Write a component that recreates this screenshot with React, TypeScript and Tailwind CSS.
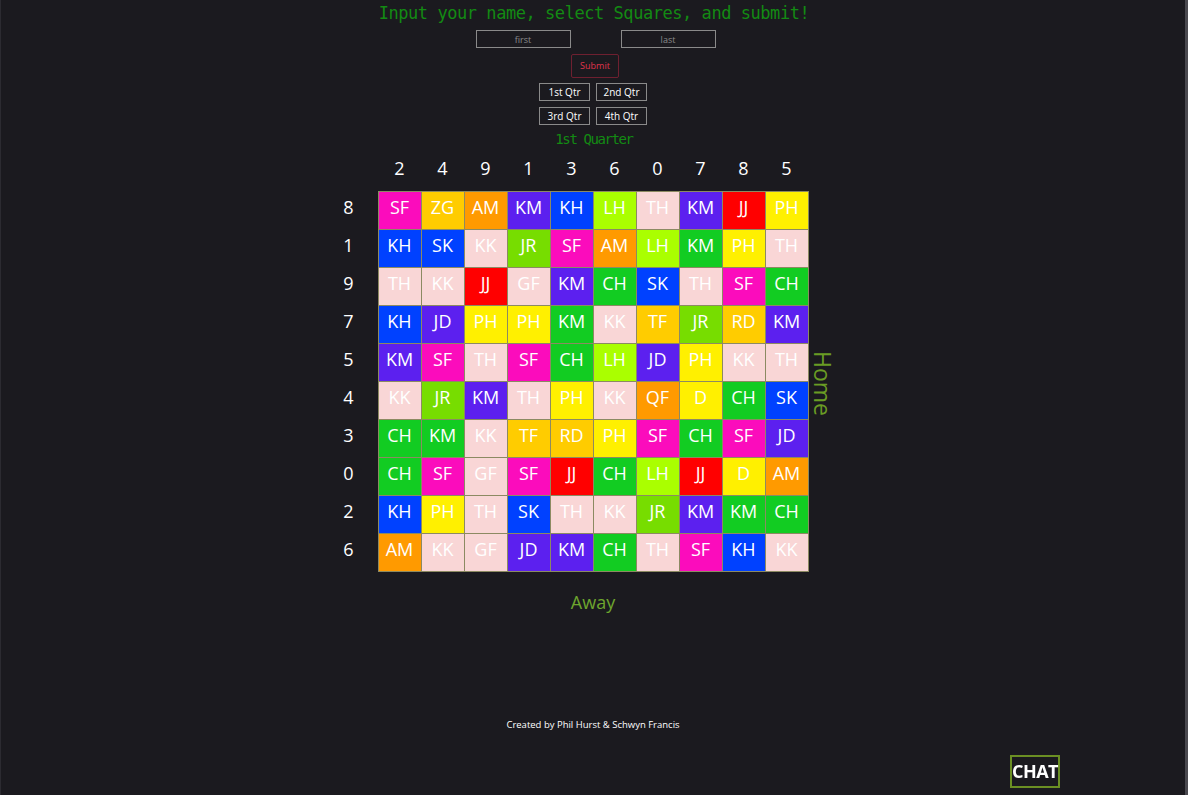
import React from "react";

const cols = [2, 4, 9, 1, 3, 6, 0, 7, 8, 5];
const rowsLabels = [8, 1, 9, 7, 5, 4, 3, 0, 2, 6];
const grid: string[][] = [
  ["SF", "ZG", "AM", "KM", "KH", "LH", "TH", "KM", "JJ", "PH"],
  ["KH", "SK", "KK", "JR", "SF", "AM", "LH", "KM*", "PH", "TH"],
  ["TH", "KK", "JJ", "GF", "KM", "CH", "SK", "TH", "SF", "CH"],
  ["KH", "JD", "PH", "PH", "KM*", "KK", "TF", "JR", "RD", "KM"],
  ["KM", "SF", "TH", "SF", "CH", "LH", "JD", "PH", "KK", "TH"],
  ["KK", "JR", "KM", "TH", "PH", "KK", "QF", "D", "CH", "SK"],
  ["CH", "KM*", "KK", "TF", "RD", "PH", "SF", "CH", "SF", "JD"],
  ["CH", "SF", "GF", "SF", "JJ", "CH", "LH", "JJ", "D", "AM"],
  ["KH", "PH", "TH", "SK", "TH", "KK", "JR", "KM", "KM*", "CH"],
  ["AM", "KK", "GF", "JD", "KM", "CH", "TH", "SF", "KH", "KK"],
];

const colorClass: Record<string, string> = {
  SF: "bg-[#fb0cbc]",
  ZG: "bg-[#ffcc00]",
  AM: "bg-[#ff9a00]",
  KM: "bg-[#5c20ef]",
  "KM*": "bg-[#12cc22]",
  KH: "bg-[#0041ff]",
  SK: "bg-[#0041ff]",
  LH: "bg-[#aaff00]",
  TH: "bg-[#f9d6d6]",
  KK: "bg-[#f9d6d6]",
  GF: "bg-[#f9d6d6]",
  JJ: "bg-[#ff0000]",
  PH: "bg-[#fff000]",
  D: "bg-[#fff000]",
  JR: "bg-[#77dd00]",
  CH: "bg-[#12cc22]",
  JD: "bg-[#5c20ef]",
  TF: "bg-[#ffcc00]",
  RD: "bg-[#ffcc00]",
  QF: "bg-[#ff9a00]",
};

const techno = { fontFamily: "'DejaVu Sans Mono', monospace" };

export default function App() {
  return (
    <div
      className="relative min-h-screen w-full bg-[#1b1a1f] border-l border-[#2c2b31] border-r-[3px] border-r-[#4a494f] flex flex-col items-center text-white"
      style={{ fontFamily: "'Open Sans', 'Noto Sans', sans-serif" }}
    >
      <div
        className="ml-[2px] h-[26px] leading-[26px] text-[17px] text-[#138a13] tracking-[-0.45px] whitespace-nowrap"
        style={techno}
      >
        Input your name, select Squares, and submit!
      </div>
      <div className="mt-[4px] ml-[5px] flex gap-[50px]">
        <input
          placeholder="first"
          className="w-[95px] h-[18px] bg-transparent border border-[#8a8a8a] text-center text-[9px] text-white placeholder:text-[#8a8a8a] outline-none"
        />
        <input
          placeholder="last"
          className="w-[95px] h-[18px] bg-transparent border border-[#8a8a8a] text-center text-[9px] text-white placeholder:text-[#8a8a8a] outline-none"
        />
      </div>
      <button className="mt-[6px] ml-[4px] w-[48px] h-[24px] border border-[#6e2030] rounded-[2px] text-[9px] text-[#e0344c] flex items-center justify-center">
        Submit
      </button>
      <div className="mt-[5px] grid grid-cols-2 gap-x-[6px] gap-y-[6px]">
        {["1st Qtr", "2nd Qtr", "3rd Qtr", "4th Qtr"].map((q) => (
          <button
            key={q}
            className="w-[51px] h-[18px] border border-[#8a8a8a] text-[10px] text-white flex items-center justify-center"
          >
            {q}
          </button>
        ))}
      </div>
      <div
        className="ml-[2px] h-[28px] leading-[28px] text-[14px] text-[#138a13] tracking-[-1.4px]"
        style={techno}
      >
        1st Quarter
      </div>

      <div className="flex">
        <div className="w-[58px]" />
        <div className="flex">
          {cols.map((c, i) => (
            <div
              key={i}
              className="w-[43px] h-[38px] flex items-center justify-center pb-[7px] text-[18px] text-white"
            >
              {c}
            </div>
          ))}
        </div>
        <div className="w-[58px]" />
      </div>

      <div className="flex">
        <div className="w-[58px] flex flex-col">
          {rowsLabels.map((r, i) => (
            <div
              key={i}
              className="h-[38px] flex items-center justify-center pb-[5px] text-[18px] text-white"
            >
              {r}
            </div>
          ))}
        </div>
        <div className="flex flex-col border-t border-l border-[#8c8a62]">
          {grid.map((row, ri) => (
            <div key={ri} className="flex">
              {row.map((name, ci) => (
                <div
                  key={ci}
                  className={`w-[43px] h-[38px] border-r border-b border-[#8c8a62] flex items-center justify-center pb-[6px] text-[18px] text-white ${colorClass[name]}`}
                >
                  {name.replace("*", "")}
                </div>
              ))}
            </div>
          ))}
        </div>
        <div className="w-[58px] flex items-center pl-[3px]">
          <div className="[writing-mode:vertical-rl] text-[23px] leading-[22px] text-[#6a9c24] mt-[4px]">
            Home
          </div>
        </div>
      </div>

      <div className="mt-[19px] h-[22px] leading-[22px] text-[18px] text-[#6ea62e]">
        Away
      </div>

      <div className="mt-[105px] text-[9.5px] text-white leading-[14px]">
        Created by Phil Hurst &amp; Schwyn Francis
      </div>

      <button className="fixed bottom-[7px] right-[128px] w-[50px] h-[33px] border-2 border-[#6b8f23] text-[18px] font-bold text-white flex items-center justify-center tracking-[-0.5px]">
        CHAT
      </button>
    </div>
  );
}
